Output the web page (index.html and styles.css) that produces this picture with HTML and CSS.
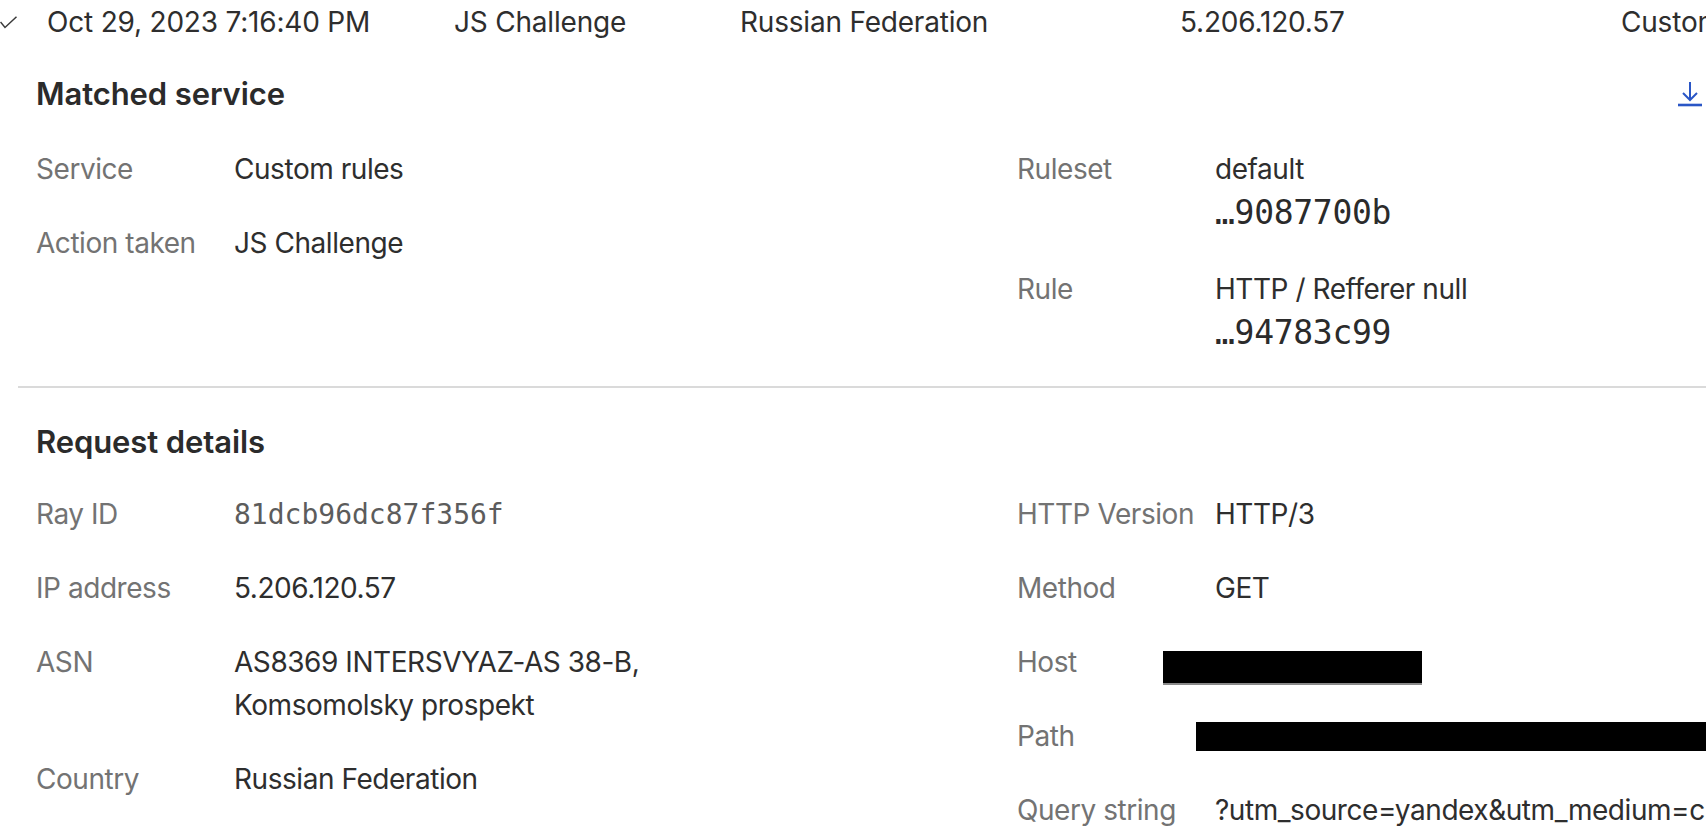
FILE: index.html
```html
<!DOCTYPE html>
<html lang="en">
<head>
    <meta charset="UTF-8">
    <meta name="viewport" content="width=device-width, initial-scale=1.0">
    <title>Event details</title>
    <link rel="stylesheet" href="styles.css">
</head>
<body>

    <div class="toprow">
        <span class="toggle">
            <svg width="18" height="14" viewBox="0 0 18 14"><polyline points="0.5,6 5,11.5 16.5,0.8" fill="none" stroke="#3a3a3a" stroke-width="1.5"/></svg>
        </span>
        <span class="cell">Oct 29, 2023 7:16:40 PM</span>
        <span class="cell">JS Challenge</span>
        <span class="cell">Russian Federation</span>
        <span class="cell">5.206.120.57</span>
        <span class="cell">Custom rules</span>
    </div>

    <section class="panel panel-first">
        <div class="panel-head">
            <h3>Matched service</h3>
            <a class="download" href="#" title="Download">
                <svg width="24" height="26" viewBox="0 0 24 26"><path d="M12 1v18M5 12l7 7 7-7" fill="none" stroke="#2a56c6" stroke-width="2"/><path d="M0 24h24" stroke="#2a56c6" stroke-width="2.6"/></svg>
            </a>
        </div>
        <div class="cols">
            <dl class="col">
                <div class="row"><dt>Service</dt><dd>Custom rules</dd></div>
                <div class="row"><dt>Action taken</dt><dd>JS Challenge</dd></div>
            </dl>
            <dl class="col col-rules">
                <div class="row"><dt>Ruleset</dt><dd>default<span class="hash">…9087700b</span></dd></div>
                <div class="row"><dt>Rule</dt><dd>HTTP / Refferer null<span class="hash">…94783c99</span></dd></div>
            </dl>
        </div>
    </section>

    <section class="panel panel-second">
        <div class="panel-head">
            <h3>Request details</h3>
        </div>
        <div class="cols">
            <dl class="col">
                <div class="row"><dt>Ray ID</dt><dd class="mono">81dcb96dc87f356f</dd></div>
                <div class="row"><dt>IP address</dt><dd>5.206.120.57</dd></div>
                <div class="row"><dt>ASN</dt><dd>AS8369 INTERSVYAZ-AS 38-B,<br>Komsomolsky prospekt</dd></div>
                <div class="row"><dt>Country</dt><dd>Russian Federation</dd></div>
            </dl>
            <dl class="col">
                <div class="row"><dt>HTTP Version</dt><dd>HTTP/3</dd></div>
                <div class="row"><dt>Method</dt><dd>GET</dd></div>
                <div class="row"><dt>Host</dt><dd><span class="redact redact-host"></span></dd></div>
                <div class="row"><dt>Path</dt><dd><span class="redact redact-path"></span></dd></div>
                <div class="row"><dt>Query string</dt><dd>?utm_source=yandex&amp;utm_medium=cpc&amp;utm_campaign=search</dd></div>
            </dl>
        </div>
    </section>

</body>
</html>
```

FILE: styles.css
```css
body {
    margin: 0;
    overflow: hidden;
    background: #fff;
    color: #2e2e2e;
    font-family: Inter, "Noto Sans", sans-serif;
    font-size: 28px;
    letter-spacing: -0.45px;
}
.toprow {
    display: grid;
    grid-template-columns: 47px 407px 286px 440px 441px auto;
    align-items: center;
    height: 44px;
    white-space: nowrap;
    letter-spacing: -0.2px;
}
.toggle {
    display: flex;
    align-items: center;
    padding-top: 2px;
}
.panel {
    margin-left: 18px;
    width: 1665px;
    padding: 32px 5px 31px 18px;
}
.panel-first {
    border-bottom: 2px solid #dadada;
}
.panel-second {
    padding-top: 36px;
}
.panel-head {
    display: flex;
    align-items: center;
    justify-content: space-between;
    margin-bottom: 36px;
}
.panel-second .panel-head {
    margin-bottom: 33px;
}
h3 {
    margin: 0;
    font-size: 31px;
    font-weight: 600;
    line-height: 36px;
    letter-spacing: -0.1px;
    color: #2b2b2b;
}
.download {
    display: flex;
    margin-right: -1px;
}
.cols {
    display: grid;
    grid-template-columns: 981px 1fr;
}
.col {
    display: flex;
    flex-direction: column;
    gap: 31px;
    margin: 0;
}
.col-rules {
    gap: 33px;
}
.row {
    display: grid;
    grid-template-columns: 198px 1fr;
    line-height: 43px;
}
dt {
    color: #737373;
}
dd {
    margin: 0;
    position: relative;
    white-space: nowrap;
}
.hash {
    display: block;
    font-family: "DejaVu Sans Mono", monospace;
    font-size: 33px;
    letter-spacing: -0.3px;
    line-height: 44px;
    color: #2b2b2b;
}
.mono {
    font-family: "DejaVu Sans Mono", monospace;
    font-size: 28px;
    letter-spacing: 0;
    color: #5c5c5c;
}
.redact {
    position: absolute;
    background: #000;
}
.redact-host {
    left: -52px;
    top: 10px;
    width: 259px;
    height: 32px;
    border-bottom: 2px solid #8a8a8a;
}
.redact-path {
    left: -19px;
    top: 7px;
    width: 560px;
    height: 29px;
}
```
